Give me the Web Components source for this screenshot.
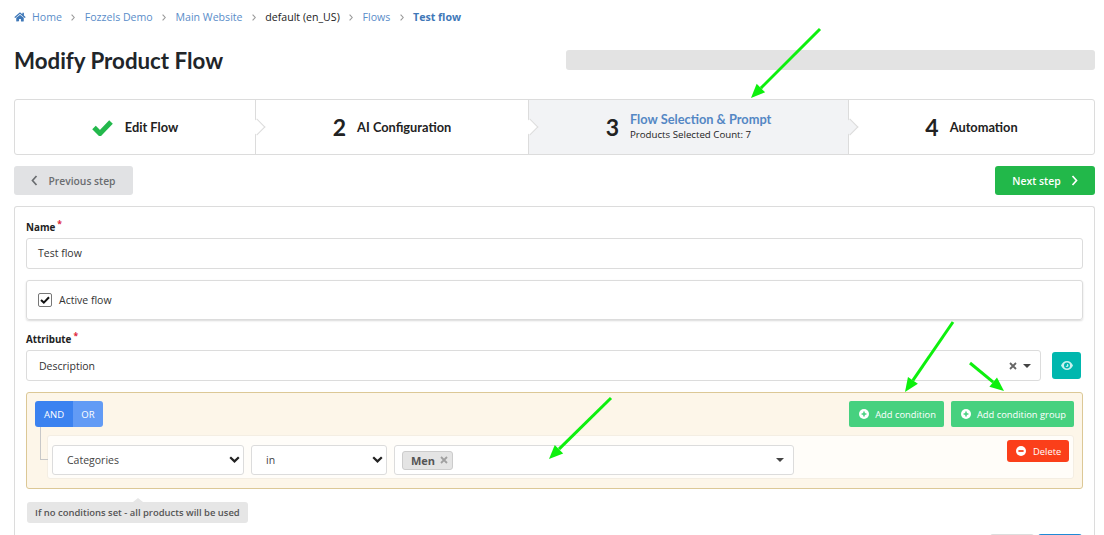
<!DOCTYPE html>
<html>
<head>
<meta charset="utf-8">
<title>Modify Product Flow</title>
<style>
  html, body { margin: 0; height: 535px; overflow: hidden; background: #fff; }
  body { font-family: "Open Sans", sans-serif; color: #212529; }
</style>
</head>
<body>
<flow-page></flow-page>

<script>
const ICON = {
  home: '<svg width="12" height="10" viewBox="0 0 576 512"><path fill="currentColor" d="M280 148 96 300v164c0 9 7 16 16 16l112-.3c9 0 16-7 16-16V368c0-9 7-16 16-16h64c9 0 16 7 16 16v96c0 9 7 16 16 16l112 .3c9 0 16-7 16-16V300L296 148c-4-4-12-4-16 0zM572 251l-84-69V44c0-7-5-12-12-12h-56c-7 0-12 5-12 12v72l-90-74c-18-15-44-15-62 0L4 251c-5 4-6 12-2 17l26 31c4 5 12 6 17 2L280 107c4-4 12-4 16 0l235 194c5 4 13 3 17-2l26-31c4-5 3-13-2-17z"/></svg>',
  plus: '<svg width="10" height="10" viewBox="0 0 10 10"><circle cx="5" cy="5" r="5" fill="#fff"/><path d="M5 2.600v4.800M2.600 5h4.800" stroke="#46d17f" stroke-width="1.500"/></svg>',
  minus: '<svg width="10" height="10" viewBox="0 0 10 10"><circle cx="5" cy="5" r="5" fill="#fff"/><path d="M2.400 5h5.200" stroke="#fb3f1a" stroke-width="1.800"/></svg>',
  eye: '<svg width="12" height="9" viewBox="0 0 12 9"><path fill="#c9f2ef" fill-rule="evenodd" d="M6 0c2.700 0 4.900 1.800 6 4.500C10.900 7.200 8.700 9 6 9S1.100 7.200 0 4.500C1.100 1.800 3.300 0 6 0zm0 1.500a3 3 0 1 0 0 6 3 3 0 0 0 0-6zM6 3a1.500 1.500 0 1 1-1.400 2 1 1 0 0 0 1.300-1.300A1 1 0 0 0 6 3z"/></svg>',
  caret: '<svg width="8" height="4" viewBox="0 0 8 4"><path d="M0 0h8L4 4z" fill="#444"/></svg>',
  chev: '<svg width="11" height="7" viewBox="0 0 11 7"><path d="M1.200 1.200 5.500 5.400 9.800 1.200" fill="none" stroke="#222" stroke-width="2.200"/></svg>',
  cross: '<svg width="8" height="8" viewBox="0 0 8 8"><path d="M1 1l6 6M7 1 1 7" fill="none" stroke="COLOR" stroke-width="1.800"/></svg>'
};

class CrumbTrail extends HTMLElement {
  constructor() {
    super();
    this.attachShadow({ mode: 'open' });
    const items = ['Home', 'Fozzels Demo', 'Main Website', 'default (en_US)', 'Flows', 'Test flow'];
    const html = items.map((t, i) => {
      let cls = 'link';
      if (i == 3) cls = 'plain';
      if (i == 5) cls = 'current';
      return `<span class="${cls}">${t}</span>`;
    }).join('<svg class="sep" width="4" height="7" viewBox="0 0 4 7"><path d="M.6.600 3.200 3.500.6 6.400" fill="none" stroke="#999" stroke-width="1.100"/></svg>');
    this.shadowRoot.innerHTML = `
      <style>
        :host { display: flex; align-items: center; height: 16px; font-size: 10.600px; color: #5a8dc9; }
        .home { display: flex; color: #3f78b8; margin-right: 6px; }
        .sep { margin: 0 9.400px; }
        .plain { color: #222; }
        .current { color: #3f78b8; font-weight: 700; }
      </style>
      <span class="home">${ICON.home}</span>${html}
    `;
  }
}
customElements.define('crumb-trail', CrumbTrail);

class StepItem extends HTMLElement {
  constructor() {
    super();
    this.attachShadow({ mode: 'open' });
    const num = this.getAttribute('num');
    const sub = this.getAttribute('sub');
    const mark = num
      ? `<span class="num">${num}</span>`
      : `<svg class="check" width="21" height="17" viewBox="0 0 21 17"><path d="M2 8.500 8 14.500 19 3" fill="none" stroke="#23b84c" stroke-width="5"/></svg>`;
    this.shadowRoot.innerHTML = `
      <style>
        :host { display: flex; align-items: center; justify-content: center; position: relative; box-sizing: border-box; height: 100%; font-family: Lato, sans-serif; color: #222; }
        :host([active]) { background: #f2f3f5; }
        :host(:not(:last-child)) { border-right: 1px solid #dcdcdc; }
        .num { font-size: 23px; font-weight: 700; margin-right: 11px; line-height: 1; }
        .check { margin-right: 12px; }
        .title { font-size: 12.800px; font-weight: 700; line-height: 16px; }
        :host([active]) .title { color: #5487c4; margin-top: -1px; }
        .sub { font-family: "Open Sans", sans-serif; font-size: 9.700px; line-height: 15px; }
        .tip { position: absolute; right: -8px; top: 21px; width: 11px; height: 11px; transform: rotate(45deg); background: inherit; border: solid #dcdcdc; border-width: 1px 1px 0 0; z-index: 1; }
        :host(:not([active])) .tip { background: #fff; }
        :host(:last-child) .tip { display: none; }
      </style>
      ${mark}
      <div><div class="title"><slot></slot></div>${sub ? `<div class="sub">${sub}</div>` : ''}</div>
      <span class="tip"></span>
    `;
  }
}
customElements.define('step-item', StepItem);

class StepBar extends HTMLElement {
  constructor() {
    super();
    this.attachShadow({ mode: 'open' });
    this.shadowRoot.innerHTML = `
      <style>
        :host { display: grid; grid-template-columns: 241px 273px 320px 1fr; box-sizing: border-box; height: 56px; border: 1px solid #dcdcdc; border-radius: 3px; }
      </style>
      <slot></slot>
    `;
  }
}
customElements.define('step-bar', StepBar);

class UiButton extends HTMLElement {
  constructor() {
    super();
    this.attachShadow({ mode: 'open' });
    this.shadowRoot.innerHTML = `
      <style>
        :host { display: inline-flex; align-items: center; box-sizing: border-box; height: 26px; border-radius: 2px; color: #fff; font-size: 9.350px; white-space: nowrap; }
        :host([kind="add"]) { background: #46d17f; padding: 0 8px 0 10px; gap: 6px; }
        :host([kind="del"]) { background: #fb3f1a; width: 62px; padding-left: 9px; gap: 7px; height: 22px; border-radius: 3px; }
        :host([kind="next"]) { background: #22b84a; height: 29px; width: 100px; justify-content: center; gap: 10px; font-size: 10.400px; font-weight: 600; border-radius: 3px; }
        :host([kind="prev"]) { background: #e1e2e4; color: #6a6d70; height: 29px; width: 119px; justify-content: center; gap: 10px; font-size: 10.300px; font-weight: 600; border-radius: 3px; }
        ::slotted(svg) { display: block; }
      </style>
      <slot></slot>
    `;
  }
}
customElements.define('ui-button', UiButton);

class FormField extends HTMLElement {
  constructor() {
    super();
    this.attachShadow({ mode: 'open' });
    this.shadowRoot.innerHTML = `
      <style>
        :host { display: block; }
        label { display: flex; height: 16px; align-items: center; font-size: 9.800px; font-weight: 700; color: #222; margin-bottom: 3px; }
        label i { color: #e0263a; font-style: normal; font-size: 8.500px; margin: -7px 0 0 2px; }
      </style>
      <label>${this.getAttribute('label')}<i>*</i></label>
      <slot></slot>
    `;
  }
}
customElements.define('form-field', FormField);

class TextBox extends HTMLElement {
  constructor() {
    super();
    this.attachShadow({ mode: 'open' });
    this.shadowRoot.innerHTML = `
      <style>
        :host { display: flex; align-items: center; box-sizing: border-box; height: 31px; padding: 0 9px 0 11px; border: 1px solid #dcdcdc; border-radius: 3px; background: #fff; font-size: 10.500px; color: #333; }
        .grow { flex: 1; }
        .tail { display: flex; align-items: center; gap: 6px; }
      </style>
      <span class="grow"><slot></slot></span>
      <span class="tail"><slot name="tail"></slot></span>
    `;
  }
}
customElements.define('text-box', TextBox);

class CheckCard extends HTMLElement {
  constructor() {
    super();
    this.attachShadow({ mode: 'open' });
    this.shadowRoot.innerHTML = `
      <style>
        :host { display: flex; align-items: center; gap: 7px; box-sizing: border-box; height: 40px; padding: 0 11px; border: 1px solid #dcdcdc; border-radius: 3px; box-shadow: 0 1px 2px rgba(0,0,0,.15); font-size: 10.500px; color: #333; }
        .box { display: flex; align-items: center; justify-content: center; box-sizing: border-box; width: 14px; height: 14px; border: 1px solid #777; border-radius: 2px; }
      </style>
      <span class="box"><svg width="10" height="8" viewBox="0 0 10 8"><path d="M1 4 3.800 6.600 9 1.200" fill="none" stroke="#111" stroke-width="2"/></svg></span>
      <slot></slot>
    `;
  }
}
customElements.define('check-card', CheckCard);

class SelectBox extends HTMLElement {
  constructor() {
    super();
    this.attachShadow({ mode: 'open' });
    this.shadowRoot.innerHTML = `
      <style>
        :host { display: flex; align-items: center; justify-content: space-between; box-sizing: border-box; height: 30px; padding: 0 3px 0 14px; border: 1px solid #dcdcdc; border-radius: 3px; background: #fff; font-size: 10.500px; color: #444; }
        svg { display: block; margin-top: -1px; }
      </style>
      <slot></slot>${ICON.chev}
    `;
  }
}
customElements.define('select-box', SelectBox);

class TagSelect extends HTMLElement {
  constructor() {
    super();
    this.attachShadow({ mode: 'open' });
    this.shadowRoot.innerHTML = `
      <style>
        :host { display: flex; align-items: center; justify-content: space-between; box-sizing: border-box; height: 30px; padding: 0 9px 0 7px; border: 1px solid #dcdcdc; border-radius: 3px; background: #fff; }
        .tag { display: flex; align-items: center; gap: 5px; box-sizing: border-box; height: 19px; padding: 0 4px 0 8px; background: #e4e4e4; border: 1px solid #ccc; border-radius: 3px; font-size: 11px; font-weight: 700; color: #555; }
        svg { display: block; }
      </style>
      <span class="tag"><slot></slot>${ICON.cross.replace('COLOR', '#a0a0a0')}</span>${ICON.caret}
    `;
  }
}
customElements.define('tag-select', TagSelect);

class ConditionGroup extends HTMLElement {
  constructor() {
    super();
    this.attachShadow({ mode: 'open' });
    this.shadowRoot.innerHTML = `
      <style>
        :host { display: block; position: relative; box-sizing: border-box; height: 97px; padding: 8px 8px 0; background: #fdf6e9; border: 1px solid #dcc896; border-radius: 3px; }
        .head { display: flex; align-items: center; height: 26px; margin-bottom: 8px; }
        .toggle { display: flex; height: 26px; border-radius: 3px; overflow: hidden; color: #fff; font-size: 9.500px; }
        .toggle span { display: flex; align-items: center; justify-content: center; }
        .and { width: 38px; background: #3b82f0; }
        .or { width: 30px; background: #629bf5; }
        .acts { margin-left: auto; display: flex; gap: 7px; }
        .row { display: grid; grid-template-columns: 192px 136px 400px 1fr; gap: 7px; box-sizing: border-box; height: 44px; margin-left: 12px; padding: 4px 4px 4px 4px; background: #fffdf9; border: 1px solid #f4eee3; border-radius: 3px; }
        .row > ::slotted(select-box), .row > ::slotted(tag-select) { margin-top: 5px; }
        .line { position: absolute; left: 13px; top: 34px; width: 7px; height: 32px; border: solid #c8c8c8; border-width: 0 0 1px 1px; }
        .del { display: flex; justify-content: flex-end; }
      </style>
      <div class="head">
        <div class="toggle"><span class="and">AND</span><span class="or">OR</span></div>
        <div class="acts"><slot name="acts"></slot></div>
      </div>
      <span class="line"></span>
      <div class="row">
        <slot name="fields"></slot>
        <div class="del"><slot name="del"></slot></div>
      </div>
    `;
  }
}
customElements.define('condition-group', ConditionGroup);

class HintTip extends HTMLElement {
  constructor() {
    super();
    this.attachShadow({ mode: 'open' });
    this.shadowRoot.innerHTML = `
      <style>
        :host { display: inline-flex; align-items: center; position: relative; box-sizing: border-box; height: 21px; padding: 0 8px; background: #e6e6e6; border-radius: 3px; font-size: 9.450px; font-weight: 600; color: #555; }
        :host::before { content: ""; position: absolute; left: 106px; top: -4px; border: solid transparent; border-width: 0 5px 4px; border-bottom-color: #e6e6e6; }
      </style>
      <slot></slot>
    `;
  }
}
customElements.define('hint-tip', HintTip);

class GreenArrows extends HTMLElement {
  constructor() {
    super();
    this.attachShadow({ mode: 'open' });
    const arrows = [
      [820, 29, 751, 98],
      [953, 322, 905, 392],
      [970, 363, 1004, 391],
      [611, 398, 549, 459]
    ];
    const shapes = arrows.map(([x1, y1, x2, y2]) => {
      const a = Math.atan2(y2 - y1, x2 - x1);
      const len = 14, w = 6;
      const bx = x2 - Math.cos(a) * len, by = y2 - Math.sin(a) * len;
      const nx = -Math.sin(a) * w, ny = Math.cos(a) * w;
      return `<line x1="${x1}" y1="${y1}" x2="${bx}" y2="${by}" stroke="#0df00d" stroke-width="3"/>` +
        `<polygon points="${x2},${y2} ${bx + nx},${by + ny} ${bx - nx},${by - ny}" fill="#0df00d"/>`;
    }).join('');
    this.shadowRoot.innerHTML = `
      <style>
        :host { position: absolute; inset: 0; pointer-events: none; z-index: 5; }
        svg { display: block; }
      </style>
      <svg width="1104" height="535">${shapes}</svg>
    `;
  }
}
customElements.define('green-arrows', GreenArrows);

class FlowPage extends HTMLElement {
  constructor() {
    super();
    this.attachShadow({ mode: 'open' });
    this.shadowRoot.innerHTML = `
      <style>
        :host { display: block; position: relative; box-sizing: border-box; width: 1104px; height: 535px; padding: 9px 9px 0 14px; overflow: hidden; }
        .top { display: flex; align-items: center; justify-content: space-between; height: 40px; margin: 15px 0 19px; }
        h1 { margin: 0; font: 700 22.300px Lato, sans-serif; color: #212529; }
        .bar { width: 529px; height: 20px; background: #e3e3e3; border-radius: 3px; }
        .nav { display: flex; justify-content: space-between; margin: 11px 0; }
        .panel { box-sizing: border-box; height: 340px; padding: 12px 11px 0; border: 1px solid #dcdcdc; border-bottom: 0; border-radius: 3px 3px 0 0; position: relative; }
        .attr { display: grid; grid-template-columns: 1fr 29px; gap: 11px; align-items: center; margin-right: 2px; }
        .eye { display: flex; align-items: center; justify-content: center; height: 27px; background: #00b7ae; border-radius: 3px; }
        .tail-btns { position: absolute; right: 12px; top: 327px; display: flex; gap: 4px; }
        .tail-btns span { display: block; height: 12px; border-radius: 3px 3px 0 0; }
        .t1 { width: 42px; background: #fff; border: 1px solid #ddd; border-bottom: 0; }
        .t2 { width: 44px; background: #1f8ad6; }
      </style>
      <crumb-trail></crumb-trail>
      <div class="top"><h1>Modify Product Flow</h1><div class="bar"></div></div>
      <step-bar>
        <step-item>Edit Flow</step-item>
        <step-item num="2">AI Configuration</step-item>
        <step-item num="3" active sub="Products Selected Count: 7">Flow Selection &amp; Prompt</step-item>
        <step-item num="4">Automation</step-item>
      </step-bar>
      <div class="nav">
        <ui-button kind="prev"><svg width="7" height="11" viewBox="0 0 7 11"><path d="M5.500 1 1.500 5.500 5.500 10" fill="none" stroke="#6a6d70" stroke-width="1.700"/></svg>Previous step</ui-button>
        <ui-button kind="next">Next step<svg width="7" height="11" viewBox="0 0 7 11"><path d="M1.500 1 5.500 5.500 1.500 10" fill="none" stroke="#fff" stroke-width="1.700"/></svg></ui-button>
      </div>
      <div class="panel">
        <form-field label="Name" style="margin-bottom:11px"><text-box style="padding-bottom:2px">Test flow</text-box></form-field>
        <check-card style="margin-bottom:11px">Active flow</check-card>
        <form-field label="Attribute" style="margin-bottom:11px">
          <div class="attr">
            <text-box><span style="margin-left:1px">Description</span><span slot="tail" style="display:flex">${ICON.cross.replace('COLOR', '#666')}</span><span slot="tail" style="display:flex">${ICON.caret}</span></text-box>
            <div class="eye">${ICON.eye}</div>
          </div>
        </form-field>
        <condition-group>
          <ui-button slot="acts" kind="add">${ICON.plus}Add condition</ui-button>
          <ui-button slot="acts" kind="add">${ICON.plus}Add condition group</ui-button>
          <select-box slot="fields">Categories</select-box>
          <select-box slot="fields">in</select-box>
          <tag-select slot="fields">Men</tag-select>
          <ui-button slot="del" kind="del">${ICON.minus}Delete</ui-button>
        </condition-group>
        <hint-tip style="margin:13px 0 0 1px">If no conditions set - all products will be used</hint-tip>
        <div class="tail-btns"><span class="t1"></span><span class="t2"></span></div>
      </div>
      <green-arrows></green-arrows>
    `;
  }
}
customElements.define('flow-page', FlowPage);
</script>
</body>
</html>
